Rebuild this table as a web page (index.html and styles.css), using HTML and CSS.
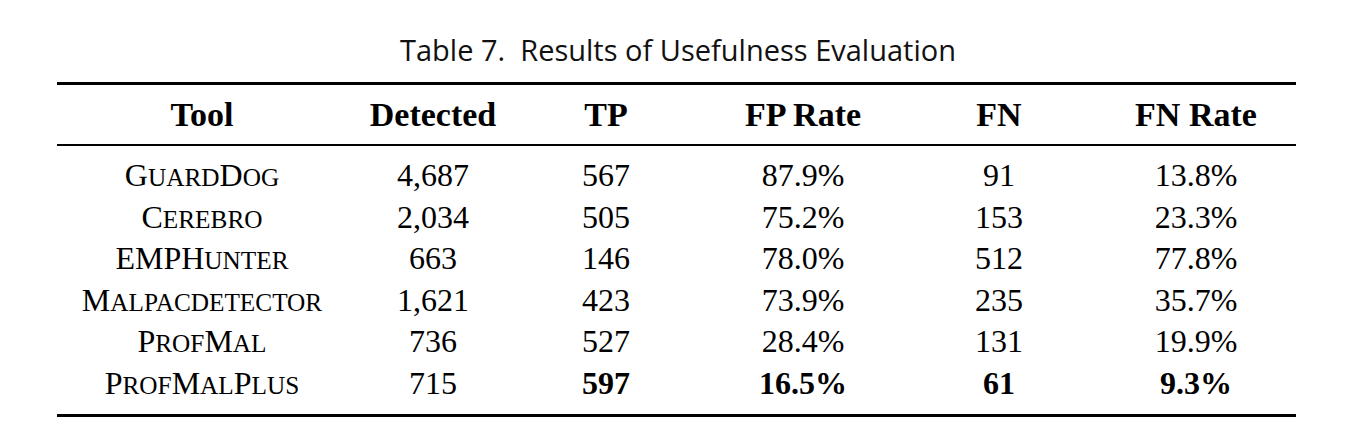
FILE: index.html
```html
<!DOCTYPE html>
<html lang="en">
<head>
<meta charset="utf-8">
<title>Table 7. Results of Usefulness Evaluation</title>
<link rel="stylesheet" href="styles.css">
</head>
<body>
<div class="page">
  <div class="caption">Table 7.&nbsp; Results of Usefulness Evaluation</div>
  <table class="results">
    <colgroup>
      <col class="c-tool">
      <col class="c-det">
      <col class="c-tp">
      <col class="c-fpr">
      <col class="c-fn">
      <col class="c-fnr">
    </colgroup>
    <thead>
      <tr>
        <th>Tool</th>
        <th>Detected</th>
        <th>TP</th>
        <th>FP Rate</th>
        <th>FN</th>
        <th class="last">FN Rate</th>
      </tr>
    </thead>
    <tbody>
      <tr class="first">
        <td>G<span class="sc">uard</span>D<span class="sc">og</span></td>
        <td>4,687</td><td>567</td><td>87.9%</td><td>91</td><td class="last">13.8%</td>
      </tr>
      <tr>
        <td>C<span class="sc">erebro</span></td>
        <td>2,034</td><td>505</td><td>75.2%</td><td>153</td><td class="last">23.3%</td>
      </tr>
      <tr>
        <td>EMPH<span class="sc">unter</span></td>
        <td>663</td><td>146</td><td>78.0%</td><td>512</td><td class="last">77.8%</td>
      </tr>
      <tr>
        <td>M<span class="sc">alpacdetector</span></td>
        <td>1,621</td><td>423</td><td>73.9%</td><td>235</td><td class="last">35.7%</td>
      </tr>
      <tr>
        <td>P<span class="sc">rof</span>M<span class="sc">al</span></td>
        <td>736</td><td>527</td><td>28.4%</td><td>131</td><td class="last">19.9%</td>
      </tr>
      <tr class="final">
        <td>P<span class="sc">rof</span>M<span class="sc">al</span>P<span class="sc">lus</span></td>
        <td>715</td><td class="best">597</td><td class="best">16.5%</td><td class="best">61</td><td class="last best">9.3%</td>
      </tr>
    </tbody>
  </table>
</div>
</body>
</html>
```
FILE: styles.css
```css
html, body {
  margin: 0;
  padding: 0;
  background: #ffffff;
}

.page {
  width: 1356px;
  height: 442px;
  overflow: hidden;
  color: #000000;
}

.caption {
  margin-top: 32px;
  height: 35px;
  line-height: 35px;
  text-align: center;
  font-family: "Open Sans", "DejaVu Sans", sans-serif;
  font-size: 29px;
  color: #111111;
}

.results {
  margin-top: 15px;
  margin-left: 57px;
  width: 1239px;
  table-layout: fixed;
  border-collapse: separate;
  border-spacing: 0;
  font-family: "Liberation Serif", "Times New Roman", serif;
  font-size: 32px;
  color: #000000;
}

.c-tool { width: 290px; }
.c-det { width: 172px; }
.c-tp { width: 174px; }
.c-fpr { width: 220px; }
.c-fn { width: 172px; }
.c-fnr { width: 211px; }

.results th,
.results td {
  padding: 0;
  text-align: center;
  white-space: nowrap;
}

.results th {
  font-size: 34px;
  font-weight: bold;
  height: 59px;
  line-height: 59px;
  border-top: 3px solid #000000;
  border-bottom: 2px solid #000000;
}

.results td {
  height: 41.6px;
  line-height: 41.6px;
  font-weight: normal;
}

.results .last {
  padding-left: 11px;
}

.results tr.first td {
  padding-top: 9px;
}

.results tr.final td {
  padding-bottom: 9px;
  border-bottom: 3px solid #000000;
}

.results td.best {
  font-weight: bold;
}

.sc {
  text-transform: uppercase;
  font-size: 0.79em;
  line-height: 1;
}
```
